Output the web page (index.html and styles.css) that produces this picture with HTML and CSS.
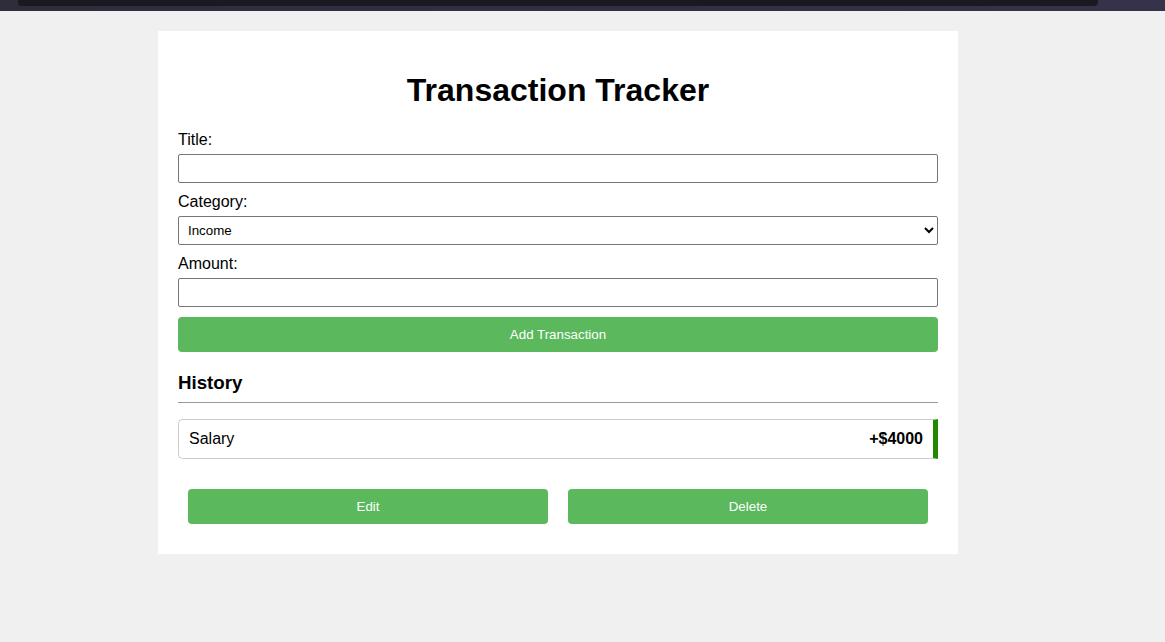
FILE: index.html
```html
<!DOCTYPE html>
<html>
<head>
<meta charset="utf-8">
<link rel="stylesheet" href="styles.css">
</head>
<body>
<div class="topbar"><div class="topbar-inner"></div></div>
<div class="container">
  <h1 class="title">Transaction Tracker</h1>
  <form class="form">
    <label class="label">Title:</label>
    <input class="field" type="text">
    <label class="label">Category:</label>
    <select class="field select">
      <option>Income</option>
      <option>Expense</option>
    </select>
    <label class="label">Amount:</label>
    <input class="field" type="text">
    <button type="button" class="btn btn-add">Add Transaction</button>
  </form>
  <h3 class="history">History</h3>
  <ul class="list">
    <li class="item income"><span>Salary</span><span class="amount">+$4000</span></li>
  </ul>
  <div class="actions">
    <button type="button" class="btn btn-action">Edit</button>
    <button type="button" class="btn btn-action">Delete</button>
  </div>
</div>
</body>
</html>
```
FILE: styles.css
```css
html, body {
  margin: 0;
  padding: 0;
  background: #f0f0f0;
  font-family: "Liberation Sans", Arial, sans-serif;
  color: #000;
}
.topbar {
  height: 11px;
  background: linear-gradient(90deg, #2f2c3c, #35324a);
  padding: 0 67px 0 18px;
}
.topbar-inner {
  height: 6px;
  background: #1a1921;
  border-radius: 0 0 4px 4px;
}
.container {
  width: 800px;
  box-sizing: border-box;
  margin: 20px 0 0 158px;
  padding: 20px;
  background: #fff;
}
.title {
  font-size: 32px;
  font-weight: bold;
  text-align: center;
  margin: 0.67em 0;
}
.form {
  display: flex;
  flex-direction: column;
}
.label {
  display: block;
  font-size: 16px;
  margin-bottom: 5px;
}
.field {
  height: 29px;
  box-sizing: border-box;
  border: 1px solid #767676;
  border-radius: 2px;
  margin: 0 0 10px;
  padding: 5px 8px;
  font-family: "Liberation Sans", Arial, sans-serif;
  font-size: 13.33px;
  background: #fff;
}
.select {
  height: 29px;
  padding: 3px 5px;
}
.btn {
  border: none;
  background: #5cb85c;
  color: #fff;
  font-family: "Liberation Sans", Arial, sans-serif;
  font-size: 13.33px;
  height: 35px;
  border-radius: 4px;
  cursor: pointer;
}
.history {
  font-size: 18.72px;
  font-weight: bold;
  margin: 20px 0 16px;
  line-height: 21px;
  padding-bottom: 9px;
  border-bottom: 1px solid #999;
}
.list {
  list-style: none;
  margin: 0 0 20px;
  padding: 0;
}
.item {
  display: flex;
  justify-content: space-between;
  align-items: center;
  height: 40px;
  box-sizing: border-box;
  padding: 0 10px;
  border: 1px solid #ccc;
  border-right: 5px solid #228800;
  border-radius: 5px 0 0 5px;
  font-size: 16px;
}
.amount {
  font-weight: bold;
}
.actions {
  display: flex;
}
.btn-action {
  flex: 1;
  margin: 10px;
}
```
